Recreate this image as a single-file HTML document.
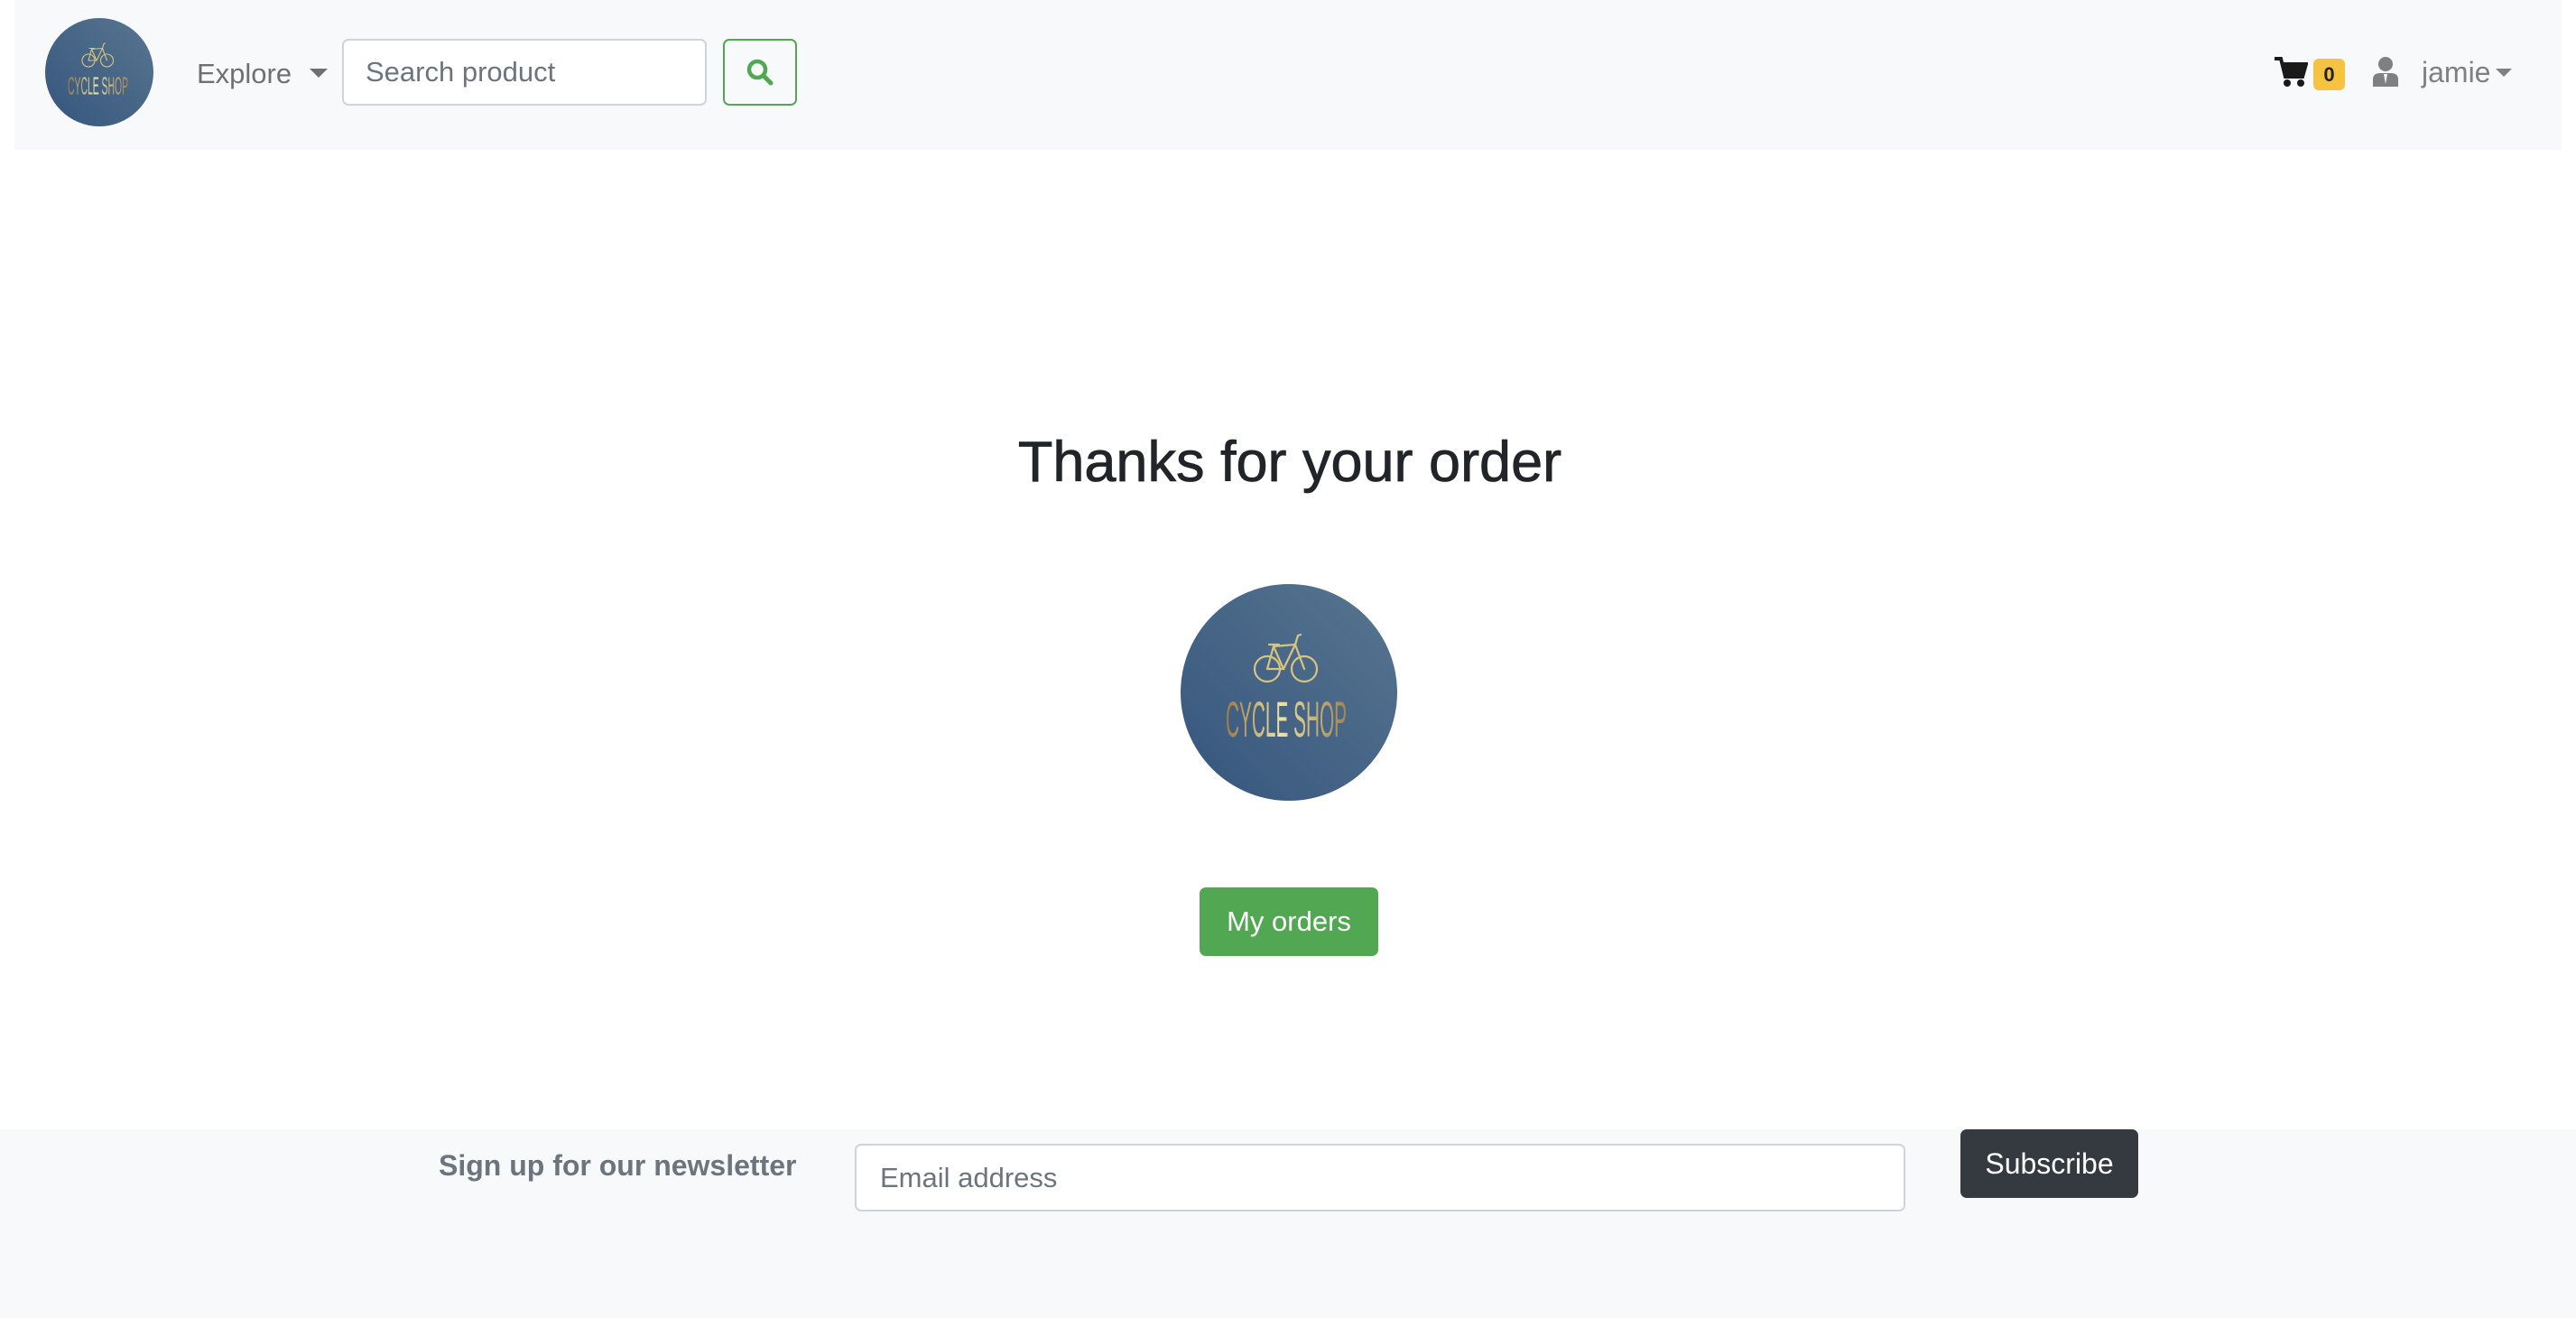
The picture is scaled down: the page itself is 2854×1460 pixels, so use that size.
<!DOCTYPE html>
<html><head><meta charset="utf-8"><style>
*{box-sizing:border-box;margin:0;padding:0}
body{width:2854px;height:1460px;background:#fff;font-family:"Liberation Sans",sans-serif;position:relative;overflow:hidden}
.abs{position:absolute}
.hdr{left:16px;top:0;width:2822px;height:166px;background:#f8f9fa}
.inp{background:#fff;border:2px solid #ced4da;border-radius:7px;color:#6c757d;font-size:30px;display:flex;align-items:center}
.ftr{left:0;top:1251px;width:2854px;height:209px;background:#f8f9fa}
</style></head><body>
<svg width="0" height="0" style="position:absolute"><defs>
<linearGradient id="bg" x1="0" y1="1" x2="1" y2="0"><stop offset="0" stop-color="#35557d"/><stop offset="1" stop-color="#587690"/></linearGradient>
<linearGradient id="gd" x1="0" y1="0" x2="1" y2="0"><stop offset="0" stop-color="#9c7a43"/><stop offset=".45" stop-color="#efe2a0"/><stop offset="1" stop-color="#a3844f"/></linearGradient>
<g id="logo">
<circle cx="120" cy="120" r="120" fill="url(#bg)"/>
<g fill="none" stroke="#d8c47e" stroke-width="2.2" stroke-linecap="round" transform="translate(-28 -27)">
<circle cx="124" cy="121" r="14"/><circle cx="165" cy="121" r="14"/>
<path d="M124 121 L131 96 L142 121 L124 121 M131 96 L155 94 L142 121 M155 94 L165 121 M126 94 L137 94 M155 94 L158 84 L161 83"/>
</g>
<text x="50" y="169" font-family="Liberation Sans Narrow,Liberation Sans,sans-serif" font-size="56" fill="url(#gd)" textLength="134" lengthAdjust="spacingAndGlyphs">CYCLE SHOP</text>
</g></defs></svg>
<div class="abs hdr"></div>
<svg class="abs" style="left:50px;top:20px" width="120" height="120" viewBox="0 0 240 240"><use href="#logo"/></svg>
<div class="abs" style="left:218px;top:64px;font-size:31px;color:#707070">Explore</div>
<div class="abs" style="left:343px;top:76px;width:0;height:0;border-left:10px solid transparent;border-right:10px solid transparent;border-top:10px solid #707070"></div>
<div class="abs inp" style="left:379px;top:43px;width:404px;height:74px;padding-left:24px;font-size:31px">Search product</div>
<div class="abs" style="left:801px;top:43px;width:82px;height:74px;border:2px solid #52a852;border-radius:7px"></div>
<svg class="abs" style="left:826px;top:64px" width="32" height="32" viewBox="0 0 32 32"><circle cx="13" cy="13" r="9" fill="none" stroke="#52a852" stroke-width="4.5"/><path d="M20 20 L28 28" stroke="#52a852" stroke-width="5" stroke-linecap="round"/></svg>
<svg class="abs" style="left:2520px;top:63px" width="37" height="34" viewBox="0 0 37 34"><path d="M0 2 H7 L12 22 H31 L35 8 H9" fill="none" stroke="#1a1a1a" stroke-width="4"/><path d="M9 8 H35 L31 22 H12Z" fill="#1a1a1a"/><circle cx="14" cy="29" r="4" fill="#1a1a1a"/><circle cx="29" cy="29" r="4" fill="#1a1a1a"/></svg>
<div class="abs" style="left:2563px;top:65px;width:35px;height:35px;background:#f5c242;border-radius:6px;font-size:22px;font-weight:bold;color:#222;text-align:center;line-height:35px">0</div>
<svg class="abs" style="left:2629px;top:63px" width="28" height="33" viewBox="0 0 28 33"><circle cx="14" cy="8" r="8" fill="#808080"/><path d="M0 33 V25 Q0 18 8 18 H20 Q28 18 28 25 V33Z" fill="#808080"/><path d="M12 19 L14 30 L16 19Z" fill="#f8f9fa"/></svg>
<div class="abs" style="left:2683px;top:62px;font-size:32px;color:#808080">jamie</div>
<div class="abs" style="left:2765px;top:76px;width:0;height:0;border-left:9px solid transparent;border-right:9px solid transparent;border-top:9px solid #808080"></div>
<div class="abs" style="left:0;width:2854px;top:476px;text-align:center;font-size:63px;color:#212529;padding-left:4px;-webkit-text-stroke:0.8px #212529">Thanks for your order</div>
<svg class="abs" style="left:1308px;top:647px" width="240" height="240" viewBox="0 0 240 240"><use href="#logo"/></svg>
<div class="abs" style="left:1329px;top:983px;width:198px;height:76px;background:#52a852;border-radius:7px;color:#fff;font-size:31px;text-align:center;line-height:76px">My orders</div>
<div class="abs ftr"></div>
<div class="abs" style="left:486px;top:1273px;font-size:32px;font-weight:bold;color:#6c757d">Sign up for our newsletter</div>
<div class="abs inp" style="left:947px;top:1267px;width:1164px;height:75px;padding-left:26px;font-size:31px">Email address</div>
<div class="abs" style="left:2172px;top:1251px;width:197px;height:76px;background:#343a40;border-radius:7px;color:#fff;font-size:32px;text-align:center;line-height:76px">Subscribe</div>
</body></html>
